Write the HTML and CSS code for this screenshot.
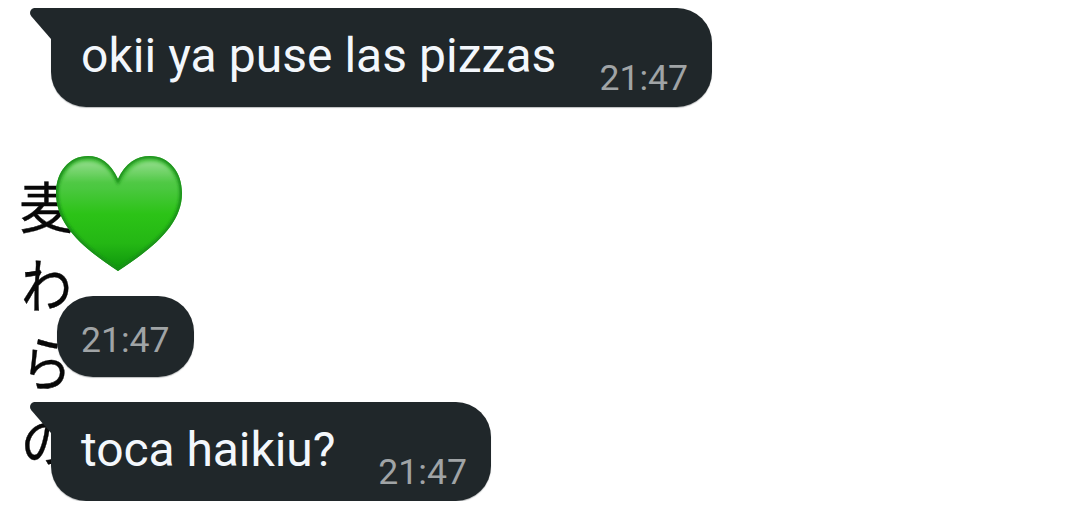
FILE: index.html
```html
<!DOCTYPE html>
<html lang="es">
<head>
    <meta charset="UTF-8">
    <meta name="viewport" content="width=device-width, initial-scale=1.0">
    <title>Chat</title>
    <link rel="stylesheet" href="styles.css">
</head>
<body>
    <div class="wallpaper" lang="ja">
        <span>麦</span>
        <span class="kana">わ</span>
        <span class="kana">ら</span>
        <span class="kana kana-small">の</span>
    </div>

    <div class="chat">
        <div class="bubble">
            <svg class="tail" width="22" height="34" viewBox="0 0 22 34">
                <path d="M22 0H5C0.5 0 -1.5 5 1.5 8.5L21 31H22Z" fill="#20272a"/>
            </svg>
            <span class="text">okii ya puse las pizzas</span>
            <span class="time">21:47</span>
        </div>

        <div class="emoji">
            <svg class="heart" width="128" height="118" viewBox="0 0 128 118">
                <defs>
                    <linearGradient id="green" x1="0" y1="0" x2="0" y2="1">
                        <stop offset="0" stop-color="#5fcc55"/>
                        <stop offset="0.28" stop-color="#4bc840"/>
                        <stop offset="0.5" stop-color="#2cc317"/>
                        <stop offset="0.75" stop-color="#24b714"/>
                        <stop offset="1" stop-color="#0b920b"/>
                    </linearGradient>
                    <linearGradient id="shine" x1="0" y1="0" x2="0" y2="1">
                        <stop offset="0" stop-color="#fff" stop-opacity="0.32"/>
                        <stop offset="1" stop-color="#fff" stop-opacity="0"/>
                    </linearGradient>
                    <filter id="soft" x="-10%" y="-10%" width="120%" height="120%">
                        <feGaussianBlur stdDeviation="1.4"/>
                    </filter>
                    <clipPath id="shape">
                        <path d="M63 24C56 8 45 1 33 1C14 1 1 17 1 38C1 70 28 93 63 116C98 93 127 70 127 38C127 17 114 1 95 1C82 1 70 8 63 24Z"/>
                    </clipPath>
                </defs>
                <g clip-path="url(#shape)">
                    <rect width="128" height="118" fill="url(#green)"/>
                    <path d="M8 28C11 13 19 7 32 7C46 7 55 14 60 28Z" fill="url(#shine)" filter="url(#soft)"/>
                    <path d="M68 28C73 14 82 7 96 7C109 7 117 13 120 28Z" fill="url(#shine)" filter="url(#soft)"/>
                    <path d="M63 24C56 8 45 1 33 1C14 1 1 17 1 38C1 70 28 93 63 116C98 93 127 70 127 38C127 17 114 1 95 1C82 1 70 8 63 24Z" fill="none" stroke="#168e16" stroke-width="5" filter="url(#soft)"/>
                </g>
            </svg>
        </div>

        <div class="bubble bubble-time">
            <span class="time">21:47</span>
        </div>

        <div class="bubble bubble-short">
            <svg class="tail" width="22" height="34" viewBox="0 0 22 34">
                <path d="M22 0H5C0.5 0 -1.5 5 1.5 8.5L21 31H22Z" fill="#20272a"/>
            </svg>
            <span class="text">toca haikiu?</span>
            <span class="time">21:47</span>
        </div>
    </div>
</body>
</html>
```

FILE: styles.css
```css
body {
    margin: 0;
    background-color: #fff;
    font-family: Roboto, sans-serif;
    overflow: hidden;
}
.wallpaper {
    position: absolute;
    left: 19px;
    top: 165px;
    display: flex;
    flex-direction: column;
    font-family: "Noto Sans CJK JP", sans-serif;
    font-size: 55px;
    line-height: 78px;
    color: #080808;
    -webkit-text-stroke: 0.4px #080808;
}
.kana {
    transform: scale(0.92, 1.07);
}
.kana-small {
    transform: scale(0.94, 1);
}
.chat {
    position: relative;
    display: flex;
    flex-direction: column;
    align-items: flex-start;
    padding: 8px 0 0 51px;
}
.bubble {
    position: relative;
    display: flex;
    align-items: flex-end;
    box-sizing: border-box;
    height: 98.5px;
    padding: 0 24px 9px 30px;
    background-color: #20272a;
    border-radius: 0 35px 35px 35px;
    box-shadow: 0 1px 1px rgba(32, 39, 42, 0.3);
}
.tail {
    position: absolute;
    left: -21px;
    top: 0;
}
.text {
    margin-bottom: 14px;
    font-size: 48px;
    line-height: 56px;
    letter-spacing: 0.04px;
    color: #f3f7fc;
    white-space: nowrap;
}
.time {
    margin-left: 43px;
    font-size: 35.6px;
    line-height: 40px;
    color: #a0a4a6;
}
.emoji {
    display: flex;
    margin: 48.5px 0 0 4px;
}
.bubble-time {
    height: 81px;
    margin: 23px 0 25px 6px;
    padding: 0 24px 17px;
    border-radius: 36px;
}
.bubble-time .time {
    margin-left: 0;
}
.bubble-short .text {
    letter-spacing: -0.07px;
}
```
